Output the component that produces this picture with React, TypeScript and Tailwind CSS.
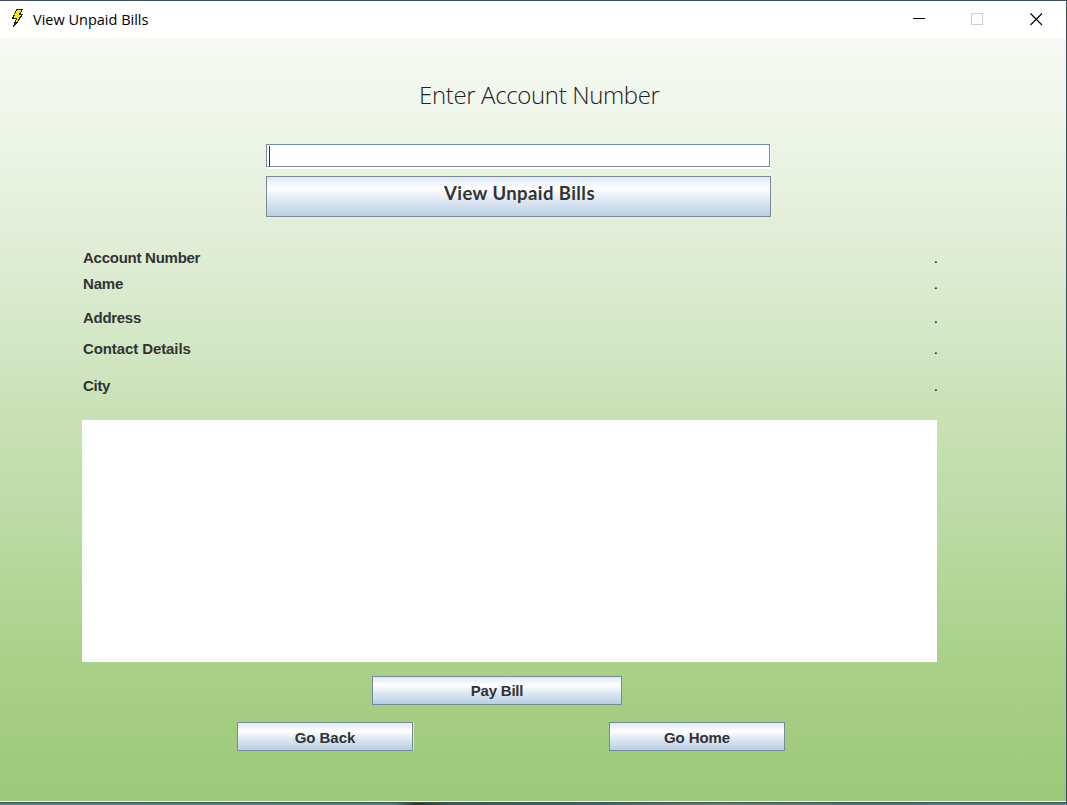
import React from "react";

type Detail = { label: string; value: string; height: string; tracking: string };

const details: Detail[] = [
  { label: "Account Number", value: ".", height: "h-[26px]", tracking: "tracking-[-0.26px]" },
  { label: "Name", value: ".", height: "h-[34px]", tracking: "tracking-[-0.2px]" },
  { label: "Address", value: ".", height: "h-[31px]", tracking: "tracking-[-0.3px]" },
  { label: "Contact Details", value: ".", height: "h-[37px]", tracking: "tracking-[-0.1px]" },
  { label: "City", value: ".", height: "h-[43px]", tracking: "tracking-[-0.3px]" },
];

function MetalButton({ label, className }: { label: string; className: string }) {
  return (
    <button
      type="button"
      className={`flex shrink-0 items-center justify-center border border-[#7a8a99] bg-[linear-gradient(to_bottom,#dde8f3_0%,#ffffff_30%,#dde8f3_60%,#b8cfe5_100%)] font-bold text-[#333333] ${className}`}
    >
      {label}
    </button>
  );
}

function BoltIcon() {
  return (
    <svg className="mb-[2px] ml-[12px] h-[19px] w-[12px]" viewBox="0 0 12 19" shapeRendering="crispEdges">
      <path d="M4.5 .5H10.5L7.5 5.5H10.5L6.5 10.5H7.5L1.5 17.5L4.5 9.5H.5L2.5 5.5Z" fill="#ffee00" stroke="#222222" strokeWidth="1" />
    </svg>
  );
}

function TitleBar() {
  return (
    <header className="flex h-[37px] shrink-0 items-center bg-white">
      <BoltIcon />
      <h1 className="ml-[9px] whitespace-nowrap font-['Open_Sans',sans-serif] text-[14.5px] leading-[20px] tracking-[0px] text-black">
        View Unpaid Bills
      </h1>
      <div className="ml-auto mr-[23px] flex items-center gap-[46px]">
        <svg className="h-[13px] w-[12px]" viewBox="0 0 12 13" shapeRendering="crispEdges">
          <path d="M0 5.5H12" stroke="#000" />
        </svg>
        <svg className="h-[13px] w-[13px]" viewBox="0 0 13 13" shapeRendering="crispEdges">
          <path d="M.5 .5H11.5V11.5H.5Z" stroke="#cccccc" fill="none" />
        </svg>
        <svg className="h-[13px] w-[13px]" viewBox="0 0 13 13">
          <path d="M.5 .5L12 12M12 .5L.5 12" stroke="#000" strokeWidth="1.1" />
        </svg>
      </div>
    </header>
  );
}

export default function App() {
  return (
    <div className="flex h-[805px] w-[1067px] flex-col overflow-hidden bg-[#4c7f91]">
      <div className="flex h-[803px] w-full flex-col border-b border-r border-t border-[#3c4d5e]">
        <TitleBar />
        <main className="flex min-h-0 flex-1 flex-col border-b border-white bg-[linear-gradient(180deg,#f7faf4_0%,#f1f7ec_8%,#ebf4e4_15%,#e1edd7_27%,#d4e8c7_38%,#c8e0b3_51%,#bedba7_62%,#abd18b_80%,#9cc978_100%)] font-['Liberation_Sans',Arial,sans-serif]">
          <h2 className="ml-[419px] mt-[38px] h-[38px] whitespace-nowrap font-['Open_Sans',sans-serif] text-[24px] font-light leading-[38px] tracking-[-0.35px] text-[#222222]">
            Enter Account Number
          </h2>
          <div className="ml-[266px] mt-[30px] flex h-[23px] w-[504px] border border-[#7a8a99] bg-white pl-[2px] pt-px shadow-[1px_2px_0_#ffffff]">
            <span className="h-[20px] w-px bg-[#333333]" />
          </div>
          <MetalButton
            label="View Unpaid Bills"
            className="ml-[266px] mt-[9px] h-[41px] w-[505px] pb-[5px] pl-[2px] font-['Lato',sans-serif] text-[18.5px] tracking-[0.42px]"
          />
          <dl className="ml-[83px] mt-[32px] w-[855px] text-[15px] font-bold leading-[18px] text-[#333333]">
            {details.map((d) => (
              <div key={d.label} className={`flex justify-between ${d.height}`}>
                <dt className={d.tracking}>{d.label}</dt>
                <dd className="font-normal text-black">{d.value}</dd>
              </div>
            ))}
          </dl>
          <div className="ml-[82px] h-[242px] w-[855px] shrink-0 bg-white" />
          <MetalButton label="Pay Bill" className="ml-[372px] mt-[14px] h-[29px] w-[250px] pt-[2px] text-[15px] tracking-[-0.2px]" />
          <div className="ml-[237px] mt-[17px] flex gap-[196px]">
            <MetalButton label="Go Back" className="h-[29px] w-[176px] pt-[3px] text-[15px] tracking-[-0.05px] shadow-[1px_0_0_#d4e8c2]" />
            <MetalButton label="Go Home" className="h-[29px] w-[176px] pt-[3px] text-[15px] tracking-[-0.1px]" />
          </div>
        </main>
      </div>
      <div className="h-[2px] w-full bg-[linear-gradient(to_right,#4f8193_0%,#4c7f91_37%,#30302c_39%,#3a5b62_42%,#39677a_56%,#777777_68%,#4c7484_80%,#4d7e91_100%)]" />
    </div>
  );
}
